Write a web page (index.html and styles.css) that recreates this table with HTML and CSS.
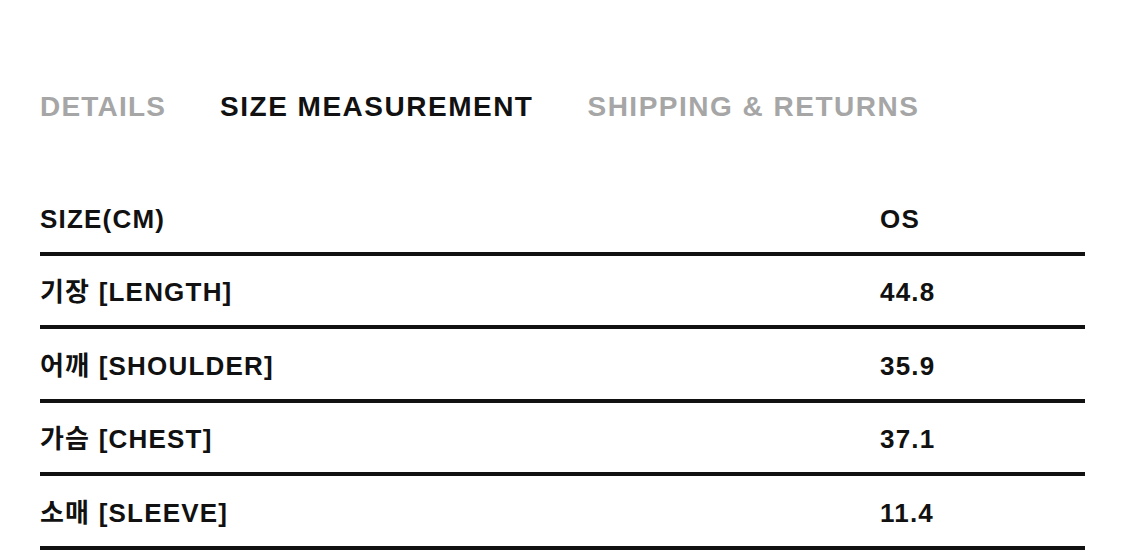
FILE: index.html
```html
<!DOCTYPE html>
<html lang="ko">
<head>
<meta charset="utf-8">
<title>Size Measurement</title>
<link rel="stylesheet" href="styles.css">
</head>
<body>
<div class="page">
  <nav class="tabs">
    <span class="tab">DETAILS</span>
    <span class="tab tab-active">SIZE MEASUREMENT</span>
    <span class="tab">SHIPPING &amp; RETURNS</span>
  </nav>
  <div class="table">
    <div class="row head"><span class="label">SIZE(CM)</span><span class="value">OS</span></div>
    <div class="row"><span class="label">기장 [LENGTH]</span><span class="value">44.8</span></div>
    <div class="row"><span class="label">어깨 [SHOULDER]</span><span class="value">35.9</span></div>
    <div class="row"><span class="label">가슴 [CHEST]</span><span class="value">37.1</span></div>
    <div class="row"><span class="label">소매 [SLEEVE]</span><span class="value">11.4</span></div>
  </div>
</div>
</body>
</html>
```

FILE: styles.css
```css
html, body {
  margin: 0;
  padding: 0;
  background: #ffffff;
}
.page {
  padding: 82px 40px 0 40px;
  font-family: "Liberation Sans", "Noto Sans CJK KR", sans-serif;
  color: #111111;
}
.tabs {
  display: flex;
  gap: 54px;
  height: 50px;
  align-items: center;
}
.tab {
  font-size: 28px;
  font-weight: 700;
  letter-spacing: 1.5px;
  color: #a6a6a6;
  line-height: 1;
}
.tab:first-child {
  letter-spacing: 1.2px;
}
.tab-active {
  color: #111111;
}
.table {
  margin-top: 50px;
  display: flex;
  flex-direction: column;
}
.row {
  display: grid;
  grid-template-columns: 840px 1fr;
  align-content: center;
  align-items: baseline;
  height: 66px;
  padding-top: 3.5px;
  border-bottom: 4px solid #111111;
  font-size: 26px;
  font-weight: 700;
  letter-spacing: 1.2px;
  line-height: 30px;
}
```
